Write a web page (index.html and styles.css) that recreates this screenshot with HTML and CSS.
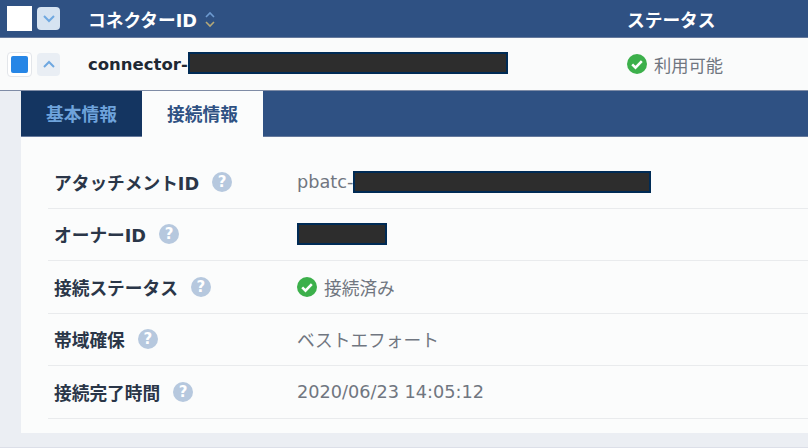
FILE: index.html
```html
<!DOCTYPE html>
<html lang="ja">
<head>
<meta charset="utf-8">
<title>コネクター</title>
<link rel="stylesheet" href="styles.css">
</head>
<body>
<div class="head">
  <span class="cb-white"></span>
  <span class="toggle toggle-head"><svg width="14" height="9" viewBox="0 0 14 9"><path d="M2 2l5 5 5-5" fill="none" stroke="#6fa8e0" stroke-width="2"/></svg></span>
  <span class="col-id head-label">コネクターID
    <svg class="sort" width="12" height="17" viewBox="0 0 12 17"><path d="M2 6l4-4 4 4" fill="none" stroke="#6d9ad0" stroke-width="1.6"/><path d="M2 11l4 4 4-4" fill="none" stroke="#b5a878" stroke-width="1.6"/></svg>
  </span>
  <span class="col-status head-label">ステータス</span>
</div>
<div class="row">
  <span class="cb-outer"><span class="cb-inner"></span></span>
  <span class="toggle toggle-row"><svg width="14" height="9" viewBox="0 0 14 9"><path d="M2 7l5-5 5 5" fill="none" stroke="#6fa8e0" stroke-width="2"/></svg></span>
  <span class="col-id row-name">connector-<span class="mask mask-name"></span></span>
  <span class="col-status status"><svg class="ok" viewBox="0 0 20 20"><circle cx="10" cy="10" r="10" fill="#3cb04b"/><path d="M5.2 10.4l3.3 3.2 6.3-6.4" fill="none" stroke="#fff" stroke-width="2.6"/></svg>利用可能</span>
</div>
<div class="detail">
  <div class="tabs">
    <span class="tab tab-off">基本情報</span>
    <span class="tab tab-on">接続情報</span>
  </div>
  <div class="panel">
    <div class="item item-first">
      <div class="key">アタッチメントID<span class="q">?</span></div>
      <div class="val">pbatc-<span class="mask mask-att"></span></div>
    </div>
    <div class="item">
      <div class="key">オーナーID<span class="q">?</span></div>
      <div class="val"><span class="mask mask-owner"></span></div>
    </div>
    <div class="item">
      <div class="key">接続ステータス<span class="q">?</span></div>
      <div class="val"><svg class="ok" viewBox="0 0 20 20"><circle cx="10" cy="10" r="10" fill="#3cb04b"/><path d="M5.2 10.4l3.3 3.2 6.3-6.4" fill="none" stroke="#fff" stroke-width="2.6"/></svg>接続済み</div>
    </div>
    <div class="item">
      <div class="key">帯域確保<span class="q">?</span></div>
      <div class="val">ベストエフォート</div>
    </div>
    <div class="item">
      <div class="key">接続完了時間<span class="q">?</span></div>
      <div class="val">2020/06/23 14:05:12</div>
    </div>
  </div>
</div>
</body>
</html>
```
FILE: styles.css
```css
* { box-sizing: border-box; }
html, body { margin: 0; height: 448px; overflow: hidden; }
body {
  background: #ebeef3;
  font-family: "DejaVu Sans", "Noto Sans CJK JP", sans-serif;
  font-size: 17.7px;
  color: #707680;
  border-bottom: 1px solid #dcdfe8;
}
.head {
  height: 38px;
  background: #2f5183;
  border-bottom: 1px solid #65799c;
  display: flex;
  align-items: center;
  padding-left: 7px;
}
.row {
  height: 53px;
  background: #fafbfb;
  border-bottom: 1px solid #7f8ca6;
  display: flex;
  align-items: center;
  padding-left: 7px;
}
.cb-white { width: 25px; height: 25px; background: #fff; margin-top: -1px; }
.cb-outer {
  width: 25px; height: 25px; background: #fff;
  border: 1px solid #e3e6ea; border-radius: 4px;
  display: flex; align-items: center; justify-content: center;
}
.cb-inner { width: 17px; height: 17px; background: #2686e6; border-radius: 2px; }
.toggle {
  width: 23px; height: 23px; margin-left: 5px; border-radius: 4px;
  display: flex; align-items: center; justify-content: center;
}
.toggle-head { background: #d6e3f1; }
.toggle-row { background: #e9eef4; }
.col-id { width: 539px; margin-left: 28px; display: flex; align-items: center; }
.col-status { display: flex; align-items: center; }
.head-label { color: #fff; font-weight: 700; }
.sort { margin-left: 7px; margin-top: 2px; }
.row-name { color: #1f2833; font-weight: 700; font-size: 16.5px; }
.mask {
  display: inline-block;
  height: 22px;
  background: #2d2d2d;
  border: 2px solid #002b55;
}
.mask-name { width: 320px; margin-top: -2px; }
.mask-att { width: 298px; }
.mask-owner { width: 90px; }
.status { color: #707680; font-size: 17.3px; }
.ok { width: 20px; height: 20px; margin-right: 7px; flex: none; }
.tabs {
  height: 46px;
  margin-left: 21px;
  background: #2f5183;
  border-bottom: 1px solid #65799c;
  display: flex;
}
.tab {
  width: 121px;
  display: flex; align-items: center; justify-content: center;
  font-weight: 700;
  padding-bottom: 2px;
}
.tab-off { background: #143561; color: #6ea3dc; }
.tab-on { background: #fbfcfc; color: #2f5183; height: 46px; }
.panel {
  margin-left: 21px;
  height: 296px;
  background: #fbfcfc;
  padding: 19px 0 0 27px;
}
.item {
  height: 52.5px;
  border-bottom: 1px solid #e9ebed;
  display: flex;
  align-items: center;
}
.key {
  width: 249px;
  color: #2a3648;
  font-weight: 700;
  display: flex;
  align-items: center;
  padding-left: 6px;
}
.q {
  width: 20px; height: 20px; margin-left: 13px;
  border-radius: 50%;
  background: #b6c8de;
  color: #fff;
  font-size: 15px; font-weight: 700;
  display: flex; align-items: center; justify-content: center;
}
.val { display: flex; align-items: center; }
```
